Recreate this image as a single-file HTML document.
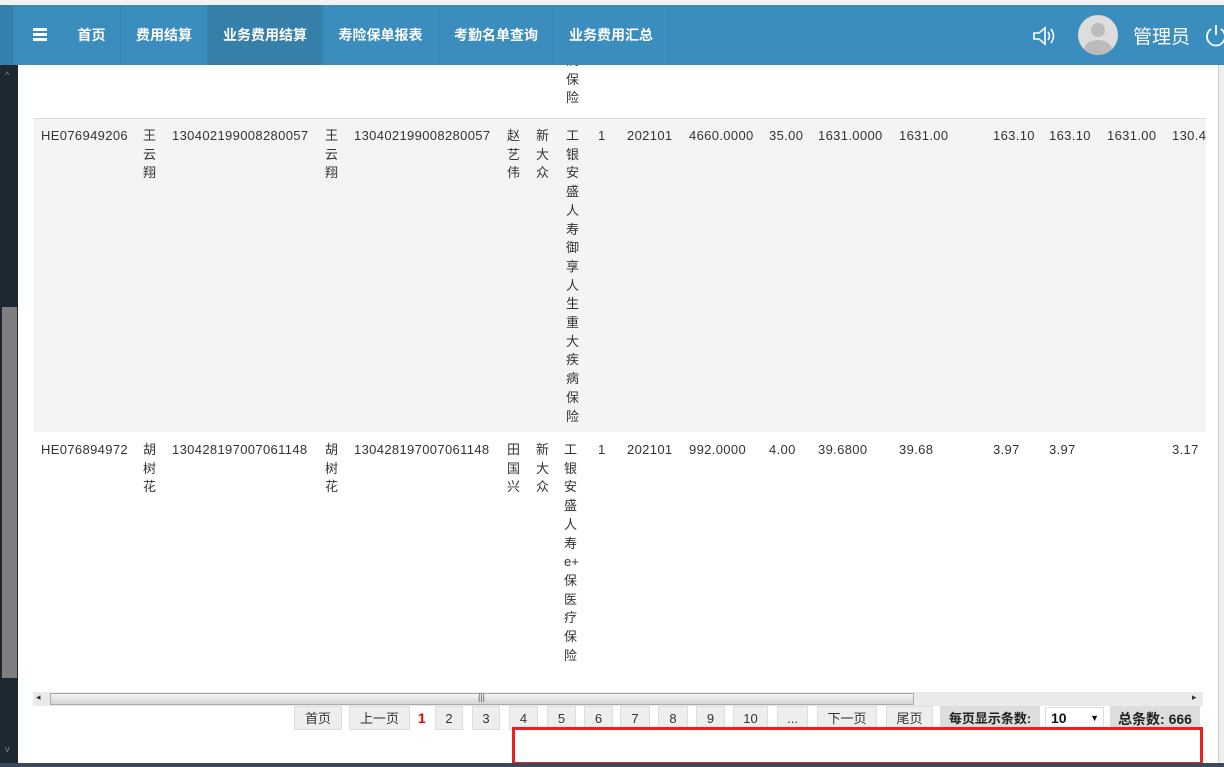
<!DOCTYPE html>
<html><head><meta charset="utf-8"><style>
*{margin:0;padding:0;box-sizing:border-box}
body{width:1224px;height:767px;overflow:hidden;background:#fff;position:relative;font-family:"Liberation Sans","Noto Sans CJK SC",sans-serif;font-size:13px;color:#333}
.a{position:absolute;white-space:nowrap;line-height:18.7px;letter-spacing:0.35px}
.v{position:absolute;width:16px;line-height:18.7px;white-space:normal;word-break:normal}
.nav{position:absolute;left:0;top:5px;width:1224px;height:60px;background:#3a8dbd}
.nav .it{position:absolute;top:0;height:60px;line-height:60px;color:#fff;font-weight:bold;font-size:14px;text-align:center;border-right:1px solid #3581ad}
.pb{position:absolute;top:706px;height:24px;line-height:24px;background:#eee;border:1px solid #ddd;text-align:center;font-size:13px;color:#333}
</style></head><body>
<div style="position:absolute;left:0;top:0;width:1224px;height:5px;background:#f2f2f2"></div>
<div style="position:absolute;left:0;top:65px;width:18px;height:698px;background:#1e2830"></div>
<div style="position:absolute;left:2px;top:307px;width:15px;height:371px;background:#7f7f7f"></div>
<div style="position:absolute;left:5px;top:70px;color:#888;font-size:9px">^</div>
<div style="position:absolute;left:5px;top:744px;color:#888;font-size:9px">v</div>
<div style="position:absolute;left:1218px;top:65px;width:6px;height:698px;background:#eee;border-left:1px solid #ccc"></div>

<div style="position:absolute;left:33px;top:118px;width:1173px;height:314px;background:#f4f4f4;border-top:1px solid #ddd"></div>

<div class="v" style="left:566px;top:52px">病保险</div>

<!-- row1 -->
<div class="a" style="left:41px;top:127px">HE076949206</div>
<div class="v" style="left:143px;top:127px">王云翔</div>
<div class="a" style="left:172px;top:127px">130402199008280057</div>
<div class="v" style="left:325px;top:127px">王云翔</div>
<div class="a" style="left:354px;top:127px">130402199008280057</div>
<div class="v" style="left:507px;top:127px">赵艺伟</div>
<div class="v" style="left:536px;top:127px">新大众</div>
<div class="v" style="left:566px;top:127px">工银安盛人寿御享人生重大疾病保险</div>
<div class="a" style="left:598px;top:127px">1</div>
<div class="a" style="left:627px;top:127px">202101</div>
<div class="a" style="left:689px;top:127px">4660.0000</div>
<div class="a" style="left:769px;top:127px">35.00</div>
<div class="a" style="left:818px;top:127px">1631.0000</div>
<div class="a" style="left:899px;top:127px">1631.00</div>
<div class="a" style="left:993px;top:127px">163.10</div>
<div class="a" style="left:1049px;top:127px">163.10</div>
<div class="a" style="left:1107px;top:127px">1631.00</div>
<div class="a" style="left:1172px;top:127px;width:34px;overflow:hidden">130.48</div>

<!-- row2 -->
<div class="a" style="left:41px;top:441px">HE076894972</div>
<div class="v" style="left:143px;top:441px">胡树花</div>
<div class="a" style="left:172px;top:441px">130428197007061148</div>
<div class="v" style="left:325px;top:441px">胡树花</div>
<div class="a" style="left:354px;top:441px">130428197007061148</div>
<div class="v" style="left:507px;top:441px">田国兴</div>
<div class="v" style="left:536px;top:441px">新大众</div>
<div class="v" style="left:564px;top:441px;width:18px">工银安盛人寿 e+ 保医疗保险</div>
<div class="a" style="left:598px;top:441px">1</div>
<div class="a" style="left:627px;top:441px">202101</div>
<div class="a" style="left:689px;top:441px">992.0000</div>
<div class="a" style="left:769px;top:441px">4.00</div>
<div class="a" style="left:818px;top:441px">39.6800</div>
<div class="a" style="left:899px;top:441px">39.68</div>
<div class="a" style="left:993px;top:441px">3.97</div>
<div class="a" style="left:1049px;top:441px">3.97</div>
<div class="a" style="left:1172px;top:441px">3.17</div>

<!-- nav (on top) -->
<div class="nav">
<div style="position:absolute;left:0;top:0;width:13px;height:60px;background:#3581ad"></div>
<div style="position:absolute;left:33px;top:23px;width:14px;height:3px;background:#fff;box-shadow:0 5px 0 #fff,0 10px 0 #fff"></div>
<div class="it" style="left:63px;width:58px">首页</div>
<div class="it" style="left:121px;width:87px">费用结算</div>
<div class="it" style="left:208px;width:115px;background:#357fa8">业务费用结算</div>
<div class="it" style="left:323px;width:116px">寿险保单报表</div>
<div class="it" style="left:439px;width:115px">考勤名单查询</div>
<div class="it" style="left:554px;width:115px">业务费用汇总</div>
<svg style="position:absolute;left:1032px;top:20px" width="26" height="22" viewBox="0 0 26 22" fill="none" stroke="#fff" stroke-width="1.6"><path d="M2 8h5l6-5v16l-6-5H2z"/><path d="M16 7q3 4 0 8M19 4q5 7 0 14"/></svg>
<div style="position:absolute;left:1078px;top:10px;width:40px;height:40px;border-radius:50%;background:#ddd;overflow:hidden"><div style="position:absolute;left:13px;top:8px;width:14px;height:14px;border-radius:50%;background:#bbb"></div><div style="position:absolute;left:6px;top:25px;width:28px;height:20px;border-radius:50%;background:#bbb"></div></div>
<div style="position:absolute;left:1133px;top:17px;color:#fff;font-size:19px">管理员</div>
<svg style="position:absolute;left:1205px;top:18px" width="22" height="24" viewBox="0 0 22 24" fill="none" stroke="#fff" stroke-width="1.8"><path d="M6 6a9 9 0 1 0 10 0"/><path d="M11 2v10"/></svg>
</div>

<!-- horizontal scrollbar -->
<div style="position:absolute;left:33px;top:692px;width:1170px;height:14px;background:#eaeaea"></div>
<div style="position:absolute;left:50px;top:693px;width:864px;height:12px;background:linear-gradient(#f4f4f4,#d4d4d4);border:1px solid #aaa"></div>
<div style="position:absolute;left:478px;top:692px;font-size:9px;color:#555">|||</div>
<div style="position:absolute;left:36px;top:692px;font-size:9px;color:#333">◂</div>
<div style="position:absolute;left:1192px;top:692px;font-size:9px;color:#333">▸</div>

<!-- pager -->
<div class="pb" style="left:294px;width:48px">首页</div>
<div class="pb" style="left:349px;width:61px">上一页</div>
<div class="a" style="left:418px;top:709px;color:#e00;font-weight:bold;font-size:14px">1</div>
<div class="pb" style="left:435px;width:28px">2</div>
<div class="pb" style="left:472px;width:28px">3</div>
<div class="pb" style="left:509px;width:29px">4</div>
<div class="pb" style="left:547px;width:29px">5</div>
<div class="pb" style="left:584px;width:29px">6</div>
<div class="pb" style="left:620px;width:30px">7</div>
<div class="pb" style="left:658px;width:30px">8</div>
<div class="pb" style="left:696px;width:29px">9</div>
<div class="pb" style="left:733px;width:35px">10</div>
<div class="pb" style="left:777px;width:31px">...</div>
<div class="pb" style="left:817px;width:60px">下一页</div>
<div class="pb" style="left:886px;width:47px">尾页</div>
<div class="pb" style="left:940px;width:100px;background:#ddd;font-weight:bold;color:#222">每页显示条数:</div>
<div style="position:absolute;left:1045px;top:707px;width:59px;height:22px;background:#fff;border:1px solid #ddd;font-weight:bold;font-size:14px;line-height:20px;padding-left:5px;color:#111">10<span style="position:absolute;right:4px;top:0;font-size:9px">▼</span></div>
<div class="pb" style="left:1110px;width:90px;background:#ddd;font-weight:bold;color:#222;font-size:14px">总条数: 666</div>

<div style="position:absolute;left:512px;top:727px;width:691px;height:38px;border:3px solid #f02020"></div>
<div style="position:absolute;left:0;top:763px;width:1224px;height:4px;background:#3a4a5a"></div>
</body></html>
